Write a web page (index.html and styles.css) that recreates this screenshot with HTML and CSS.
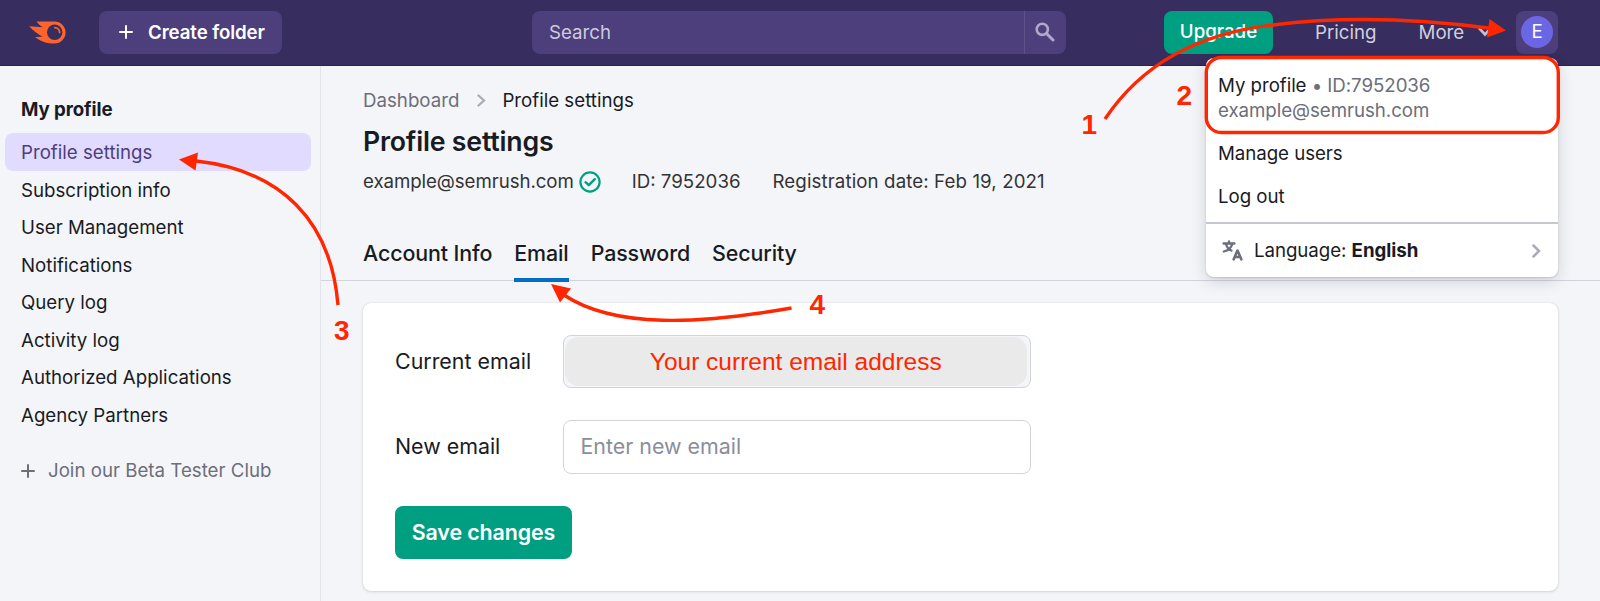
FILE: index.html
```html
<!DOCTYPE html>
<html lang="en">
<head>
    <meta charset="UTF-8">
    <meta name="viewport" content="width=device-width, initial-scale=1.0">
    <title>Profile settings - Semrush</title>
    <link rel="stylesheet" href="styles.css">
</head>
<body>
    <header class="header">
        <a class="logo" href="#">
            <svg width="38" height="23" viewBox="0 0 38 23">
                <path fill="#ff642d" d="M7.500 0.500H25.500A11.050 11.050 0 0 1 25.500 22.600C18 22.600 11.500 20.500 6 16L13.500 15.800C9.500 13.500 4 9.500 0.200 5.200L14 6.300C11.500 5 9 3 7.500 0.500Z"/>
                <circle cx="25.700" cy="11.300" r="7.700" fill="#372d5e"/>
                <path d="M25.800 6.600A4.900 4.900 0 0 1 30.600 11.400" fill="none" stroke="#ff642d" stroke-width="1.800" stroke-linecap="round"/>
            </svg>
        </a>
        <button class="create-folder">
            <svg width="14" height="14" viewBox="0 0 14 14"><path d="M7 1V13M1 7H13" stroke="#fff" stroke-width="2" stroke-linecap="round"/></svg>
            <span>Create folder</span>
        </button>
        <div class="search">
            <span class="search-text">Search</span>
            <span class="search-button">
                <svg width="20" height="20" viewBox="0 0 20 20" fill="none" stroke="#b0a8c9">
                    <circle cx="7.300" cy="7.300" r="5.600" stroke-width="2.600"/>
                    <path d="M11.500 11.500L18 18" stroke-width="3" stroke-linecap="round"/>
                </svg>
            </span>
        </div>
        <a class="upgrade" href="#">Upgrade</a>
        <a class="header-link" href="#">Pricing</a>
        <a class="header-link more" href="#">More
            <svg width="14" height="10" viewBox="0 0 14 10"><path d="M1.500 1.500L7 7.500L12.500 1.500" fill="none" stroke="#c3c0cf" stroke-width="2.600" stroke-linecap="round"/></svg>
        </a>
        <div class="user"><span class="avatar">E</span></div>
    </header>

    <div class="page">
        <nav class="sidebar">
            <h2>My profile</h2>
            <a class="active" href="#">Profile settings</a>
            <a href="#">Subscription info</a>
            <a href="#">User Management</a>
            <a href="#">Notifications</a>
            <a href="#">Query log</a>
            <a href="#">Activity log</a>
            <a href="#">Authorized Applications</a>
            <a href="#">Agency Partners</a>
            <a class="beta" href="#">
                <svg width="14" height="14" viewBox="0 0 14 14"><path d="M7 1V13M1 7H13" stroke="#6c6e79" stroke-width="2" stroke-linecap="round"/></svg>
                <span>Join our Beta Tester Club</span>
            </a>
        </nav>

        <main class="main">
            <div class="breadcrumbs">
                <a href="#">Dashboard</a>
                <svg width="9" height="13" viewBox="0 0 9 13"><path d="M1.500 1.500L7 6.500L1.500 11.500" fill="none" stroke="#a9abb6" stroke-width="2.300" stroke-linecap="round"/></svg>
                <span>Profile settings</span>
            </div>
            <h1>Profile settings</h1>
            <div class="meta">
                <span class="meta-email">example@semrush.com</span>
                <svg width="22" height="22" viewBox="0 0 22 22" fill="none" stroke="#009f81">
                    <circle cx="11" cy="11" r="9.600" stroke-width="2.200"/>
                    <path d="M6.500 11.200L9.800 14.200L15.800 8.200" stroke-width="2.400" stroke-linecap="round" stroke-linejoin="round"/>
                </svg>
                <span class="meta-id">ID: 7952036</span>
                <span class="meta-date">Registration date: Feb 19, 2021</span>
            </div>
            <div class="tabs">
                <a href="#">Account Info</a>
                <a class="selected" href="#">Email</a>
                <a href="#">Password</a>
                <a href="#">Security</a>
            </div>

            <form class="card">
                <div class="field">
                    <label>Current email</label>
                    <div class="input disabled"><div class="current">Your current email address</div></div>
                </div>
                <div class="field">
                    <label>New email</label>
                    <div class="input">Enter new email</div>
                </div>
                <button class="save" type="button">Save changes</button>
            </form>
        </main>
    </div>

    <!-- User menu -->
    <div class="menu">
        <div class="menu-profile">
            <div>My profile <span>• ID:7952036</span></div>
            <div><span>example@semrush.com</span></div>
        </div>
        <a class="menu-item" href="#">Manage users</a>
        <a class="menu-item" href="#">Log out</a>
        <div class="menu-language">
            <svg class="lang-icon" width="21" height="21" viewBox="0 0 21 21" fill="none" stroke="#6c6e79" stroke-width="2.300" stroke-linecap="round" stroke-linejoin="round">
                <path d="M1.500 3.500H12.500M7 1.500V3.500M4 4C5 7.500 7 9.800 9.500 10.600M10.200 4C9.200 8 6 10.500 1.800 11.500"/>
                <path d="M11.600 19.400L15.500 10.500L19.400 19.400M12.800 17H18.200" stroke-width="2.600"/>
            </svg>
            <span>Language: <b>English</b></span>
            <svg class="lang-arrow" width="9" height="14" viewBox="0 0 9 14"><path d="M1.500 1.500L7 7L1.500 12.500" fill="none" stroke="#a9abb6" stroke-width="2.500" stroke-linecap="round"/></svg>
        </div>
    </div>

    <!-- Step arrows and numbers -->
    <svg class="steps" width="1600" height="601" viewBox="0 0 1600 601">
        <g fill="none" stroke="#ff2600" stroke-width="3.400">
            <rect x="1206.300" y="57.500" width="352" height="75" rx="15"/>
            <path d="M1105 119C1147 56 1210 32 1273 25C1345 16 1420 19 1490 28.300"/>
            <path d="M338 305C331 220 280 170 196 161"/>
            <path d="M791.500 308C700 324 615 329 564 295"/>
        </g>
        <g fill="#ff2600">
            <path d="M1506 30.500L1489.500 19L1487 37.500Z"/>
            <path d="M179 159.500L198 152.500L195.500 170.500Z"/>
            <path d="M551 284L571 288.500L560 302.500Z"/>
            <text x="1081.500" y="134">1</text>
            <text x="1176.500" y="104.500">2</text>
            <text x="334" y="340">3</text>
            <text x="809.500" y="313.500">4</text>
        </g>
    </svg>
</body>
</html>
```
FILE: styles.css
```css
* {
    box-sizing: border-box;
}

body {
    margin: 0;
    height: 601px;
    overflow: hidden;
    position: relative;
    background: #f4f5f9;
    color: #191b23;
    font-family: Inter, "Liberation Sans", sans-serif;
    font-size: 18.7px;
    line-height: 25px;
}

a {
    color: inherit;
    text-decoration: none;
}

svg {
    display: block;
    flex: none;
}

button {
    border: 0;
    font-family: inherit;
    color: #fff;
}

/* Header */
.header {
    display: flex;
    align-items: center;
    height: 66px;
    padding: 0 42px 1px 29px;
    background: #372d5e;
    border-bottom: 1px solid #2b2150;
    white-space: nowrap;
}

.logo {
    width: 70px;
}

.create-folder {
    display: flex;
    align-items: center;
    gap: 15px;
    width: 183px;
    height: 43px;
    padding: 0 0 0 20px;
    border-radius: 8px;
    background: #4d3e7c;
    font-size: 18.7px;
    font-weight: 600;
    letter-spacing: -0.1px;
}

.search {
    display: flex;
    width: 534px;
    height: 43px;
    margin-left: 250px;
    border-radius: 8px;
    background: #4d3e7c;
    color: #cfcbdc;
    line-height: 43px;
}

.search-text {
    flex: 1;
    padding-left: 17px;
}

.search-button {
    display: flex;
    align-items: center;
    width: 42px;
    padding-left: 10px;
    border-left: 1px solid #5f5288;
}

.upgrade {
    width: 109px;
    height: 43px;
    margin-left: 98px;
    border-radius: 8px;
    background: #009f81;
    color: #fff;
    font-weight: 500;
    line-height: 42px;
    text-align: center;
}

.header-link {
    margin-left: 42px;
    color: #d3d0dd;
}

.more {
    display: flex;
    align-items: center;
    gap: 14px;
}

.user {
    display: flex;
    align-items: center;
    justify-content: center;
    width: 42px;
    height: 43px;
    margin-left: auto;
    border-radius: 8px;
    background: #4d3e7c;
}

.avatar {
    width: 32px;
    height: 32px;
    border-radius: 50%;
    background: #6b66e3;
    color: #fff;
    line-height: 32px;
    text-align: center;
}

/* Page */
.page {
    display: flex;
    height: 535px;
}

.sidebar {
    width: 321px;
    padding: 31px 9px 0 5px;
    border-right: 1px solid #e3e4ea;
}

.sidebar h2 {
    margin: 0 0 11px 16px;
    font-size: 18.7px;
    line-height: 25px;
    font-weight: 700;
    letter-spacing: -0.1px;
}

.sidebar a {
    display: block;
    height: 37.5px;
    padding-left: 16px;
    border-radius: 8px;
    line-height: 39px;
}

.sidebar .active {
    background: #e1dbff;
    color: #4d3e7c;
}

.sidebar .beta {
    display: flex;
    align-items: center;
    gap: 13px;
    margin-top: 19px;
    color: #6c6e79;
}

.main {
    flex: 1;
    padding-top: 22px;
}

.breadcrumbs {
    display: flex;
    align-items: center;
    gap: 17.5px;
    padding-left: 42px;
}

.breadcrumbs a {
    color: #6c6e79;
}

.breadcrumbs span {
    margin-left: -1px;
}

h1 {
    margin: 10px 0 0 42px;
    font-size: 26.7px;
    line-height: 36px;
    font-weight: 600;
    letter-spacing: -0.2px;
}

.meta {
    display: flex;
    align-items: center;
    margin: 10px 0 0 42px;
    color: #333;
}

.meta-email {
    letter-spacing: -0.08px;
}

.meta svg {
    margin-left: 5px;
}

.meta-id {
    margin-left: 31px;
}

.meta-date {
    margin-left: 32px;
    letter-spacing: 0.1px;
}

.tabs {
    display: flex;
    gap: 22px;
    height: 49px;
    margin-top: 38px;
    padding-left: 42px;
    border-bottom: 1px solid #d1d4db;
    font-size: 21.4px;
    font-weight: 500;
    line-height: 43px;
    letter-spacing: -0.1px;
}

.tabs a {
    height: 50px;
}

.tabs .selected {
    border-bottom: 4px solid #006dca;
}

.card {
    height: 288px;
    margin: 22px 42px 0;
    padding: 31.5px 32px;
    border-radius: 8px;
    background: #fff;
    box-shadow: 0 0 1px rgba(25, 27, 35, 0.2), 0 1px 3px rgba(25, 27, 35, 0.14);
    font-size: 21.4px;
}

.field {
    display: flex;
    align-items: center;
    margin-bottom: 32px;
}

.field label {
    width: 167.5px;
}

.input {
    width: 468.5px;
    height: 53.5px;
    padding-left: 17px;
    border: 1px solid #d1d4db;
    border-radius: 8px;
    color: #8a8e9b;
    line-height: 51px;
}

.input.disabled {
    padding: 1px 3px 1px 1px;
    background: #f4f5f9;
}

.current {
    height: 100%;
    border-radius: 14px;
    background: #eaeaea;
    color: #ff2600;
    font-family: "Liberation Sans", sans-serif;
    font-size: 24.5px;
    line-height: 50px;
    text-align: center;
}

.save {
    width: 177px;
    height: 53.5px;
    padding: 0 0 1px;
    border-radius: 8px;
    background: #009f81;
    font-size: 21.4px;
    font-weight: 600;
    letter-spacing: -0.1px;
}

/* User menu */
.menu {
    position: absolute;
    top: 58px;
    left: 1206px;
    width: 352px;
    height: 219px;
    border-radius: 8px;
    background: #fff;
    box-shadow: 0 1px 2px rgba(25, 27, 35, 0.15), 0 4px 16px rgba(25, 27, 35, 0.16);
    letter-spacing: -0.05px;
}

.menu-profile {
    padding: 15px 12px 11px;
}

.menu-profile span {
    color: #6c6e79;
}

.menu-item {
    display: block;
    height: 43px;
    padding-left: 12px;
    line-height: 40px;
}

.menu-language {
    display: flex;
    align-items: center;
    height: 55px;
    margin-top: 2px;
    padding: 0 17px 0 16px;
    border-top: 2px solid #c4c7cf;
}

.lang-icon {
    margin-right: 11px;
}

.lang-arrow {
    margin-left: auto;
}

/* Steps */
.steps {
    position: absolute;
    top: 0;
    left: 0;
}

.steps text {
    font-family: "Liberation Sans", sans-serif;
    font-size: 28px;
    font-weight: 700;
}
```
